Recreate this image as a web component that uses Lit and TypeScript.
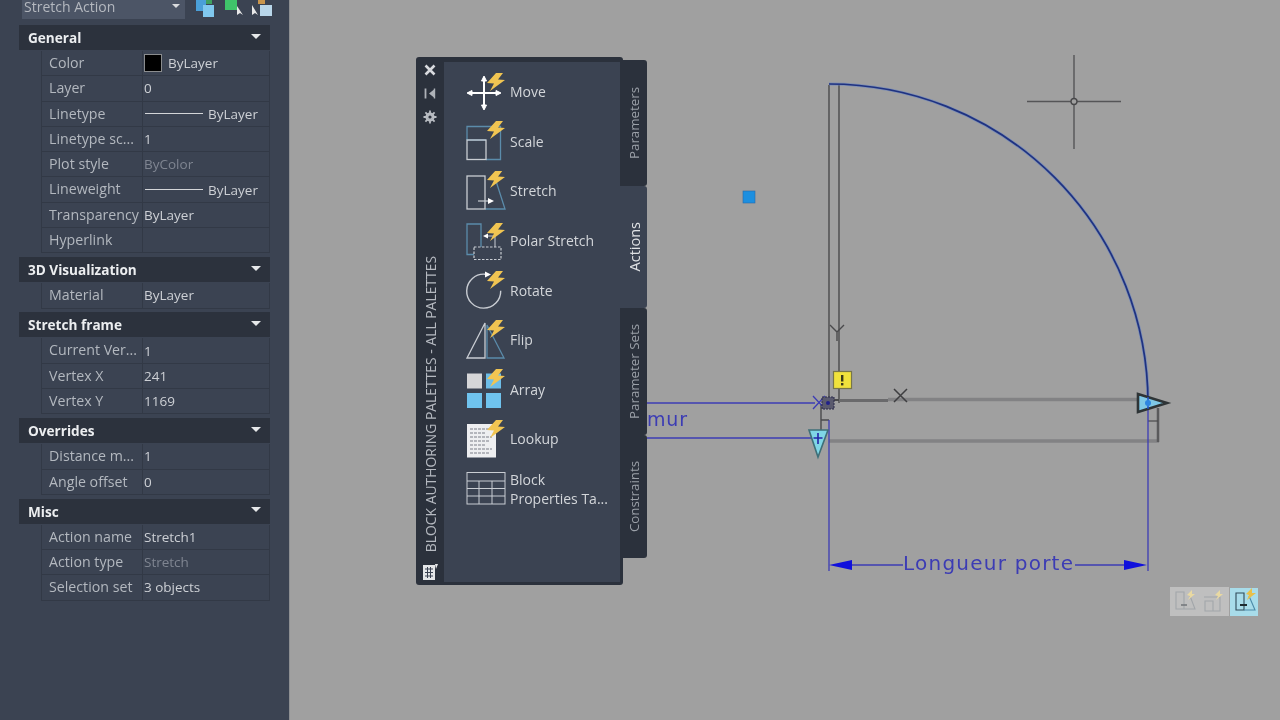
import { LitElement, css, html, svg } from 'lit';
import { customElement } from 'lit/decorators.js';

type Row = { label: string; value?: string; kind?: 'swatch' | 'line' | 'dim' };
type Section = { title: string; rows: Row[] };

const sections: Section[] = [
  {
    title: 'General',
    rows: [
      { label: 'Color', value: 'ByLayer', kind: 'swatch' },
      { label: 'Layer', value: '0' },
      { label: 'Linetype', value: 'ByLayer', kind: 'line' },
      { label: 'Linetype sc...', value: '1' },
      { label: 'Plot style', value: 'ByColor', kind: 'dim' },
      { label: 'Lineweight', value: 'ByLayer', kind: 'line' },
      { label: 'Transparency', value: 'ByLayer' },
      { label: 'Hyperlink' },
    ],
  },
  { title: '3D Visualization', rows: [{ label: 'Material', value: 'ByLayer' }] },
  {
    title: 'Stretch frame',
    rows: [
      { label: 'Current Ver...', value: '1' },
      { label: 'Vertex X', value: '241' },
      { label: 'Vertex Y', value: '1169' },
    ],
  },
  {
    title: 'Overrides',
    rows: [
      { label: 'Distance m...', value: '1' },
      { label: 'Angle offset', value: '0' },
    ],
  },
  {
    title: 'Misc',
    rows: [
      { label: 'Action name', value: 'Stretch1' },
      { label: 'Action type', value: 'Stretch', kind: 'dim' },
      { label: 'Selection set', value: '3 objects' },
    ],
  },
];

const WHITE = '#c9cdd3';
const BLUE = '#5b8cab';

// bolt drawn at the top right corner of a 42x40 icon
const bolt = (y = 0) => svg`
  <polygon transform="translate(0 ${y})" fill="#f1c552"
    points="31,0 22,10 29,10.5 25,18 40,7 33,6.5 38,0" />`;

const icons = {
  move: svg`
    <g stroke="#fff" stroke-width="2" fill="#fff">
      <path d="M3 21H35M19 5V37" fill="none" />
      <polygon points="2,21 7,18.5 7,23.5" stroke-width="1" />
      <polygon points="36,21 31,18.5 31,23.5" stroke-width="1" />
      <polygon points="19,4 16.5,9 21.5,9" stroke-width="1" />
      <polygon points="19,38 16.5,33 21.5,33" stroke-width="1" />
    </g>
    ${bolt(1)}`,
  scale: svg`
    <path d="M2 19V5.5H35.5V38.5H21" fill="none" stroke=${BLUE} stroke-width="1.3" />
    <path d="M2 19H21" stroke=${BLUE} stroke-width="1.3" />
    <rect x="2" y="19" width="19" height="19.5" fill="none" stroke=${WHITE} stroke-width="1.3" />
    ${bolt(0)}`,
  stretch: svg`
    <path d="M20 38H40L31 10" fill="none" stroke=${BLUE} stroke-width="1.3" />
    <rect x="2" y="5" width="18" height="33" fill="none" stroke=${WHITE} stroke-width="1.3" />
    <path d="M13 30H24" stroke=${WHITE} stroke-width="1.2" />
    <polygon points="29,30 23,27 23,33" fill="#fff" />
    ${bolt(-1)}`,
  polar: svg`
    <path d="M9 33.5H2V3H16V26" fill="none" stroke=${BLUE} stroke-width="1.3" />
    <rect x="9" y="26" width="27" height="12.5" fill="none" stroke=${WHITE} stroke-width="1.2" stroke-dasharray="2.5 1.5" />
    <path d="M22 15H30V26" fill="none" stroke=${WHITE} stroke-width="1" />
    <polygon points="18,15 23,12.5 23,17.5" fill="#fff" />
    ${bolt(2)}`,
  rotate: svg`
    <path d="M20 4.2A17 17 0 1 0 35.7 20.7" fill="none" stroke=${WHITE} stroke-width="1.4" />
    <polygon points="26,4.5 20,1.5 20,7.5" fill="#fff" />
    ${bolt(1)}`,
  flip: svg`
    <polygon points="2,38 20,3 20,38" fill="none" stroke=${WHITE} stroke-width="1.3" />
    <polygon points="22,38 22,5 39,38" fill="none" stroke=${BLUE} stroke-width="1.3" />
    ${bolt(0)}`,
  array: svg`
    <rect x="2" y="4.5" width="15" height="15" fill="#d6d6d8" />
    <rect x="21" y="4.5" width="15" height="15" fill="#6dbde8" />
    <rect x="2" y="24" width="15" height="15" fill="#6fc3ee" />
    <rect x="21" y="24" width="15" height="15" fill="#6fc3ee" />
    ${bolt(0)}`,
  lookup: svg`
    <rect x="2" y="5" width="29" height="33.5" fill="#eeeff1" />
    <path d="M5 10H27M5 14H20M5 18H27M5 22H24M5 26H20M5 30H27M5 34H24" stroke="#7a7f88" stroke-width="1.2" stroke-dasharray="3 1" />
    ${bolt(1)}`,
  table: svg`
    <g fill="none" stroke=${WHITE} stroke-width="1">
      <rect x="2" y="3.5" width="38" height="31.5" />
      <path d="M2 12H40M2 19.5H40M2 27H40M14 12V35M27 12V35" />
    </g>`,
};

const actions: { name: keyof typeof icons; label: string }[] = [
  { name: 'move', label: 'Move' },
  { name: 'scale', label: 'Scale' },
  { name: 'stretch', label: 'Stretch' },
  { name: 'polar', label: 'Polar Stretch' },
  { name: 'rotate', label: 'Rotate' },
  { name: 'flip', label: 'Flip' },
  { name: 'array', label: 'Array' },
  { name: 'lookup', label: 'Lookup' },
  { name: 'table', label: 'Block Properties Ta...' },
];

const tabs = [
  { label: 'Parameters', h: 126 },
  { label: 'Actions', h: 122, active: true },
  { label: 'Parameter Sets', h: 127 },
  { label: 'Constraints', h: 123 },
];

@customElement('app-root')
export class AppRoot extends LitElement {
  static styles = css`
    :host {
      display: flex;
      width: 1280px;
      height: 720px;
      overflow: hidden;
      font-family: 'Open Sans', 'Liberation Sans', sans-serif;
      font-size: 13.5px;
      color: #c2c6cc;
      filter: blur(0.4px);
    }
    .props {
      width: 290px;
      flex: none;
      box-sizing: border-box;
      background: #3b4352;
      border-right: 1px solid #8d8f92;
      padding-left: 19px;
      padding-right: 19px;
    }
    .toolbar {
      display: flex;
      align-items: center;
      height: 19px;
      margin-left: 3px;
      margin-bottom: 6px;
      gap: 7px;
    }
    .combo {
      width: 163px;
      height: 19px;
      flex: none;
      box-sizing: border-box;
      background: #4c5566;
      color: #b4b8bf;
      padding-left: 2px;
      font-size: 14px;
      line-height: 13px;
      position: relative;
      overflow: hidden;
    }
    .combo::after {
      content: '';
      position: absolute;
      right: 5px;
      top: 4px;
      border: 4px solid transparent;
      border-top: 4px solid #d9dbde;
    }
    .toolbar svg {
      flex: none;
    }
    .section {
      margin-bottom: 3.9px;
    }
    .head {
      height: 25px;
      margin-bottom: 1px;
      background: #2c323d;
      color: #eceef0;
      font-weight: 700;
      font-size: 13.6px;
      line-height: 25px;
      padding-left: 9px;
      display: flex;
      justify-content: space-between;
      align-items: center;
      padding-right: 9px;
    }
    .head i {
      border: 5px solid transparent;
      border-top: 5px solid #e6e8ea;
      border-bottom: 0;
      margin-top: -3px;
    }
    .row {
      display: grid;
      grid-template-columns: 101px 1fr;
      height: 25.3px;
      box-sizing: border-box;
      margin-left: 22px;
      border-bottom: 1px solid #323946;
      border-left: 1px solid #323946;
      border-right: 1px solid #323946;
      line-height: 24px;
    }
    .label {
      padding-left: 7px;
      color: #b3b8bf;
      font-size: 14.2px;
      white-space: nowrap;
      overflow: hidden;
      border-right: 1px solid #323946;
    }
    .value {
      padding-left: 1px;
      display: flex;
      align-items: center;
      gap: 6px;
      color: #cdd0d5;
      white-space: nowrap;
    }
    .value.dim {
      color: #7f8591;
    }
    .swatch {
      width: 18px;
      height: 18px;
      box-sizing: border-box;
      background: #000;
      border: 1px solid #8a8c8e;
      flex: none;
    }
    .line {
      width: 58px;
      height: 1px;
      background: #d3d5d8;
      flex: none;
      margin-left: 1px;
      margin-right: -1px;
    }
    .canvas {
      flex: 1;
      position: relative;
      background: #a0a0a0;
    }
    .drawing {
      position: absolute;
      inset: 0;
      width: 100%;
      height: 100%;
    }
    .palette {
      position: absolute;
      left: 126px;
      top: 57px;
      display: flex;
      align-items: flex-start;
    }
    .frame {
      width: 207px;
      height: 528px;
      box-sizing: border-box;
      background: #2b313c;
      border-radius: 3px;
      padding: 5px 3px 3px 0;
      display: flex;
    }
    .title {
      width: 28px;
      flex: none;
      display: flex;
      flex-direction: column;
      align-items: center;
      padding-top: 1px;
      color: #b5b9c0;
    }
    .title svg {
      flex: none;
      margin-bottom: 10px;
    }
    .title span {
      writing-mode: vertical-rl;
      transform: rotate(180deg);
      white-space: nowrap;
      font-size: 13.9px;
      margin-top: auto;
      margin-bottom: 11px;
    }
    .title svg:last-child {
      margin-bottom: 2px;
    }
    .list {
      flex: 1;
      background: #3b4352;
      padding: 5px 0 0 21px;
    }
    .item {
      height: 49.6px;
      display: flex;
      align-items: center;
      gap: 3px;
      color: #d3d6da;
      font-size: 14px;
      line-height: 19px;
    }
    .item svg {
      flex: none;
    }
    .item span {
      width: 100px;
    }
    .tabs {
      margin-top: 3px;
      display: flex;
      flex-direction: column;
      align-items: flex-end;
    }
    .tab {
      width: 24px;
      box-sizing: border-box;
      padding-right: 2px;
      background: #2b313c;
      border-radius: 0 3px 3px 0;
      display: flex;
      align-items: center;
      justify-content: center;
      color: #9ba0a8;
    }
    .tab.active {
      width: 27px;
      margin-left: -3px;
      padding-left: 3px;
      background: #3b4352;
      color: #dfe1e4;
    }
    .tab span {
      writing-mode: vertical-rl;
      transform: rotate(180deg);
      white-space: nowrap;
      font-size: 13.3px;
    }
    .tab.active span {
      font-size: 14.5px;
    }
  `;

  renderRow(r: Row) {
    return html`<div class="row">
      <div class="label">${r.label}</div>
      <div class="value ${r.kind === 'dim' ? 'dim' : ''}">
        ${r.kind === 'swatch' ? html`<b class="swatch"></b>` : ''}
        ${r.kind === 'line' ? html`<b class="line"></b>` : ''}
        ${r.value ?? ''}
      </div>
    </div>`;
  }

  renderDrawing() {
    const blue = '#3c3cb4';
    const dark = '#4a4a4c';
    return html`<svg class="drawing" viewBox="290 0 990 720">
      <!-- walls -->
      <g fill="none" stroke=${dark} stroke-width="1.4">
        <path d="M829 85V403M839 85V403" />
        <path d="M821 404V438M821 420H829" />
        <path d="M829 400H839" stroke-width="2" />
      </g>
      <path d="M839 400.5H888" stroke="#6a6a6c" stroke-width="3" fill="none" />
      <path d="M888 399.5H1138" stroke="#828284" stroke-width="3.5" fill="none" />
      <path d="M829 441H1159" stroke="#828284" stroke-width="3.5" fill="none" />
      <path d="M1158 408V442" stroke="#5a5a5c" stroke-width="2.5" fill="none" />
      <path d="M1148 421H1158" stroke=${dark} stroke-width="1.2" />
      <!-- Y and X marks -->
      <path d="M830 325L837 332L844 325M837 332V341" stroke=${dark} stroke-width="1.4" fill="none" />
      <path d="M894 389L907 402M907 389L894 402" stroke="#3e3e40" stroke-width="1.5" />
      <!-- door arc -->
      <path d="M829 84A319 319 0 0 1 1148 403" fill="none" stroke="#5f7fc8" stroke-width="3.2" opacity=".55" />
      <path d="M829 84A319 319 0 0 1 1148 403" fill="none" stroke="#1f3280" stroke-width="1.7" />
      <!-- dimensions -->
      <g stroke=${blue} stroke-width="1.3" fill="none">
        <path d="M647 403H815M647 438H812" />
        <path d="M829 420V571M1148 403V571" />
        <path d="M845 565H903M1075 565H1130" />
        <path d="M813 396L825 409M825 396L813 409" />
      </g>
      <polygon points="829,565 852,560 852,570" fill="#1010dc" />
      <polygon points="1147,565 1124,560 1124,570" fill="#1010dc" />
      <text x="903" y="570" textLength="170" font-family="DejaVu Sans" font-size="20" fill=${blue}>Longueur porte</text>
      <text x="647" y="426" textLength="40" font-family="DejaVu Sans" font-size="19" fill=${blue}>mur</text>
      <!-- base point grip -->
      <rect x="822" y="397" width="12" height="12" fill="#5a5a6e" stroke="#2a2a4a" stroke-width="1" stroke-dasharray="2 1" />
      <circle cx="828" cy="403" r="2" fill="#20208a" />
      <!-- warning -->
      <rect x="833.5" y="371.5" width="18" height="17" fill="#f0e23c" stroke="#77764a" stroke-width="1.2" />
      <rect x="841" y="375" width="2.4" height="6.5" fill="#3a3a1a" />
      <rect x="841" y="383" width="2.4" height="2.4" fill="#3a3a1a" />
      <!-- down grip -->
      <polygon points="809,430 828,430 818,457" fill="#7fd6e6" stroke="#3f6f78" stroke-width="1.6" />
      <path d="M818 433V444M813.5 438H822.5" stroke="#2424a8" stroke-width="1.6" />
      <!-- right grip -->
      <polygon points="1138,394 1138,412 1167,403" fill="#7fc8e6" stroke="#2e3436" stroke-width="2.6" />
      <path d="M1148 397V409" stroke="#1f50c8" stroke-width="1.4" />
      <circle cx="1148" cy="403" r="3" fill="#2f86e0" />
      <!-- selected grip -->
      <rect x="743" y="191" width="12" height="12" fill="#1c8fe0" stroke="#2a6aa8" stroke-width=".6" />
      <!-- crosshair -->
      <path d="M1027 101.5H1121M1074 55V149" stroke="#555557" stroke-width="1.4" />
      <circle cx="1074" cy="101.5" r="3" fill="#a0a0a0" stroke="#48484a" stroke-width="1.4" />
      <!-- stretch action badges -->
      <rect x="1170" y="587" width="59" height="29" fill="#bfbfbf" />
      <rect x="1230" y="588" width="28" height="28" fill="#a8dcea" />
      <g fill="none" stroke-width="1.1">
        <path d="M1176 592H1184V609H1176ZM1184 609H1195L1190 596" stroke="#a2a6aa" />
        <path d="M1181 605H1187" stroke="#75797d" stroke-width="1.6" />
        <path d="M1204 597H1220V611H1205V601H1213V611" stroke="#a2a6aa" />
        <path d="M1236 593H1244V610H1236Z" stroke="#2f4a58" />
        <path d="M1244 610H1255L1249 596" stroke="#4c8aa8" />
      </g>
      <polygon points="1192,590 1187,595 1190,596 1188,600 1195,594 1192,594" fill="#e9d9a2" />
      <polygon points="1220,590 1215,595 1218,596 1216,600 1223,594 1220,594" fill="#e9d9a2" />
      <polygon points="1252,588 1246,594 1249,595 1247,600 1256,593 1252,593" fill="#e8c04a" />
      <path d="M1240 605H1247" stroke="#1e2a30" stroke-width="2" />
    </svg>`;
  }

  render() {
    return html`
      <aside class="props">
        <div class="toolbar">
          <div class="combo">Stretch Action</div>
          <svg width="80" height="19" viewBox="0 0 80 19">
            <rect x="4" y="0" width="10" height="11" fill="#4a9fd8" />
            <rect x="11" y="5" width="11" height="12" fill="#80c8ee" />
            <rect x="14" y="0" width="6" height="4" fill="#3fa060" />
            <rect x="33" y="0" width="12" height="10" fill="#3fc46a" />
            <polygon points="45,6 45,15 48,13 51,15" fill="#e8e8e8" />
            <polygon points="60,5 60,15 63,13 66,15" fill="#e8e8e8" />
            <rect x="68" y="5" width="12" height="11" fill="#b8d6ea" />
            <rect x="66" y="0" width="7" height="4" fill="#c9964e" />
          </svg>
        </div>
        ${sections.map(
          (s) => html`<section class="section">
            <div class="head">${s.title}<i></i></div>
            ${s.rows.map((r) => this.renderRow(r))}
          </section>`,
        )}
      </aside>
      <main class="canvas">
        ${this.renderDrawing()}
        <div class="palette">
          <div class="frame">
            <div class="title">
              <svg width="14" height="14" viewBox="0 0 14 14">
                <path d="M2.5 2.5L11.5 11.5M11.5 2.5L2.5 11.5" stroke="#d8dade" stroke-width="2.6" />
              </svg>
              <svg width="14" height="13" viewBox="0 0 14 12">
                <path d="M2.5 1V11" stroke="#aeb2b8" stroke-width="1.8" />
                <path d="M6 6L11 2V10Z" fill="#aeb2b8" />
                <path d="M11.5 1V11" stroke="#aeb2b8" stroke-width="1.4" />
              </svg>
              <svg width="14" height="14" viewBox="0 0 14 14">
                <circle cx="7" cy="7" r="3.6" fill="none" stroke="#b8bcc2" stroke-width="2" />
                <path d="M7 0.5V13.5M0.5 7H13.5M2.4 2.4L11.6 11.6M11.6 2.4L2.4 11.6" stroke="#b8bcc2" stroke-width="1.8" />
                <circle cx="7" cy="7" r="1.6" fill="#2b313c" />
              </svg>
              <span>BLOCK AUTHORING PALETTES - ALL PALETTES</span>
              <svg width="16" height="17" viewBox="0 0 16 17">
                <rect x="1" y="2" width="12" height="15" fill="#e4e6e8" />
                <path d="M13 1L16 1L14 6Z" fill="#e4e6e8" />
                <path d="M3 6H11M3 9.5H11M3 13H11M5.5 4V15M8.5 4V15" stroke="#3b4352" stroke-width="1" />
              </svg>
            </div>
            <div class="list">
              ${actions.map(
                (a) => html`<div class="item">
                  <svg width="42" height="40" viewBox="0 0 42 40">${icons[a.name]}</svg>
                  <span>${a.label}</span>
                </div>`,
              )}
            </div>
          </div>
          <div class="tabs">
            ${tabs.map(
              (t) => html`<div
                class="tab ${t.active ? 'active' : ''}"
                style="height:${t.h}px"
              >
                <span>${t.label}</span>
              </div>`,
            )}
          </div>
        </div>
      </main>
    `;
  }
}
